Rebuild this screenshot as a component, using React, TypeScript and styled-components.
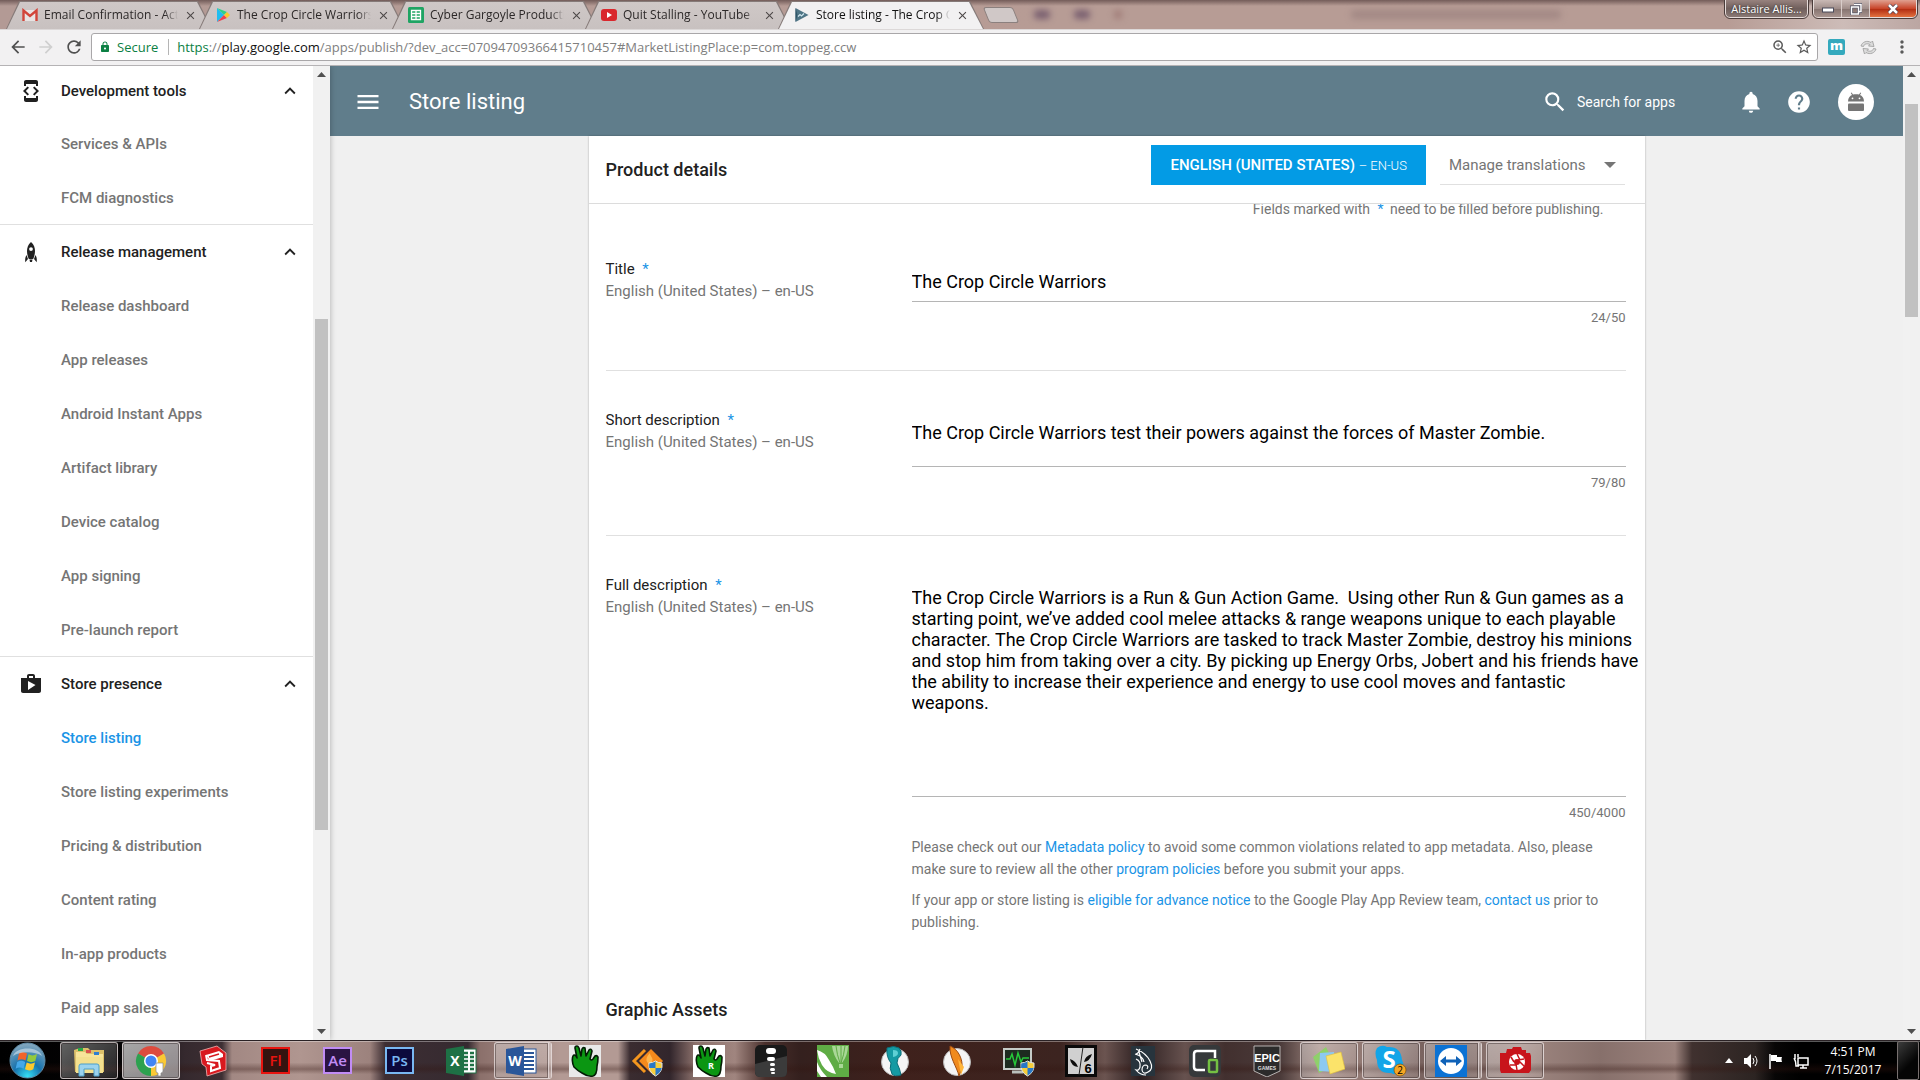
import React from "react";
import styled, { createGlobalStyle, css } from "styled-components";
import {
  MdArrowBack,
  MdArrowForward,
  MdRefresh,
  MdLock,
  MdZoomIn,
  MdStarBorder,
  MdMoreVert,
  MdMenu,
  MdSearch,
  MdNotifications,
  MdHelp,
  MdDeveloperMode,
  MdShop,
  MdKeyboardArrowUp,
  MdClose,
} from "react-icons/md";

const Global = createGlobalStyle`
  *, *::before, *::after { box-sizing: border-box; }
  body { margin: 0; overflow: hidden; font-family: Roboto, "Liberation Sans", sans-serif; }
  button, input, textarea { font-family: inherit; }
  svg { display: block; flex: none; }
`;

const ui = `"Open Sans", "Noto Sans", sans-serif`;
const blue = "#1a94e6";
const grey = "#757575";
const ink = "#212121";

/* ---------- window frame ---------- */

const Desktop = styled.div`
  height: 100vh;
  display: grid;
  grid-template-rows: 29px 37px minmax(0, 1fr) 40px;
`;

const TabStrip = styled.header`
  display: flex;
  justify-content: space-between;
  align-items: flex-start;
  padding-left: 6px;
  background:
    linear-gradient(rgba(60, 40, 40, 0.55), rgba(60, 40, 40, 0) 6px),
    linear-gradient(90deg, #b39a95, #b79c95 55%, #b79c95 90%, #cdbcb8 96%, #bba6a2);
  font-family: ${ui};
`;

const Tabs = styled.nav`
  display: flex;
  align-items: flex-end;
  height: 29px;
`;

const slant = css`
  clip-path: polygon(13px 0, calc(100% - 14px) 0, 100% 100%, 0 100%);
`;

const Tab = styled.div<{ $active?: boolean }>`
  position: relative;
  display: flex;
  align-items: center;
  gap: 6px;
  width: 206px;
  height: 28px;
  padding: 0 16px;
  margin-right: -13px;
  background: #857a78;
  ${slant}
  z-index: ${(p) => (p.$active ? 2 : 1)};
  &::before {
    content: "";
    position: absolute;
    inset: 1px 1px 0 1px;
    background: ${(p) => (p.$active ? "#f2f1f2" : "linear-gradient(#cfc8c7, #c8c1c0)")};
    ${slant}
  }
  & > * {
    position: relative;
  }
`;

const TabTitle = styled.a<{ $active?: boolean }>`
  flex: 1;
  overflow: hidden;
  white-space: nowrap;
  font-size: 12px;
  line-height: 16px;
  text-decoration: none;
  color: ${(p) => (p.$active ? "#111" : "#2c2828")};
  mask-image: linear-gradient(90deg, #000 90%, transparent);
`;

const PlainButton = styled.button`
  display: flex;
  align-items: center;
  justify-content: center;
  padding: 0;
  border: 0;
  background: none;
  color: inherit;
  cursor: pointer;
`;

const TabClose = styled(PlainButton)`
  width: 12px;
  height: 12px;
  color: #4d4848;
`;

const NewTab = styled.button`
  width: 30px;
  height: 16px;
  margin: 0 0 6px 15px;
  padding: 0;
  border: 1px solid #8b807e;
  border-radius: 3px;
  background: #d0c8c7;
  transform: skewX(22deg);
`;

const Glow = styled.div`
  flex: 1;
  display: flex;
  align-items: center;
  gap: 24px;
  height: 29px;
  padding-left: 18px;
  filter: blur(3px);
`;

const Smudge = styled.span<{ $w: number; $c: string }>`
  width: ${(p) => p.$w}px;
  height: 9px;
  border-radius: 4px;
  background: ${(p) => p.$c};
  &:last-child {
    margin-left: 205px;
  }
`;

const WindowControls = styled.div`
  display: flex;
  gap: 5px;
  padding-right: 3px;
`;

const Profile = styled.button`
  width: 83px;
  height: 18px;
  padding: 0;
  border: 1px solid #e6dcda;
  border-top: 0;
  border-radius: 0 0 5px 5px;
  outline: 1px solid #4a3c3a;
  background: linear-gradient(#97827e, #705f5c 50%, #8a7975);
  color: #fff;
  font-size: 11px;
  line-height: 14px;
  text-shadow: 0 0 2px #222;
  font-family: ${ui};
`;

const WinButtons = styled.div`
  display: flex;
  height: 18px;
  border: 1px solid #e6dcda;
  border-top: 0;
  border-radius: 0 0 5px 5px;
  outline: 1px solid #4a3c3a;
  overflow: hidden;
`;

const WinButton = styled.button<{ $close?: boolean }>`
  display: flex;
  align-items: center;
  justify-content: center;
  width: ${(p) => (p.$close ? 46 : 28)}px;
  padding: 0;
  border: 0;
  border-right: 1px solid #d9cdca;
  background: ${(p) =>
    p.$close
      ? "linear-gradient(#e0a090, #c8452a 50%, #b02a10 52%, #e2713f)"
      : "linear-gradient(#c9b9b5, #a08e8a 50%, #85736f 52%, #a8948f)"};
  &:last-child {
    border-right: 0;
  }
`;

const Toolbar = styled.div`
  display: flex;
  align-items: center;
  padding: 0 8px;
  background: #f2f1f2;
  border-bottom: 1px solid #b5b3b5;
  box-shadow: inset 0 1px 0 #dcd8d8;
  color: #5a5a5a;
  font-family: ${ui};
`;

const NavButtons = styled.div`
  display: flex;
  gap: 9px;
  margin-right: 8px;
`;

const NavButton = styled(PlainButton)`
  width: 19px;
  height: 22px;
  color: #505050;
  &:disabled {
    color: #cfcfcf;
  }
`;

const Omnibox = styled.div`
  flex: 1;
  display: flex;
  align-items: center;
  gap: 6px;
  height: 28px;
  padding: 0 4px 0 7px;
  border: 1px solid #a9a7a9;
  border-radius: 3px;
  background: #fff;
  font-size: 13px;
  line-height: 20px;
`;

const Secure = styled.span`
  padding-right: 10px;
  border-right: 1px solid #b5b5b5;
  color: #0b8043;
  line-height: 16px;
`;

const Url = styled.a`
  flex: 1;
  padding-left: 2px;
  color: #808080;
  text-decoration: none;
  b {
    font-weight: 400;
    color: #111;
  }
  i {
    font-style: normal;
    color: #0b8043;
  }
`;

const Extensions = styled.div`
  display: flex;
  align-items: center;
  gap: 15px;
  margin-left: 10px;
`;

const MGlyph = styled.span`
  width: 17px;
  height: 16px;
  border-radius: 2px;
  background: #34a9bd;
  color: #fff;
  font: 800 13px/13px ${ui};
  text-align: center;
`;

/* ---------- page ---------- */

const Page = styled.div`
  display: grid;
  grid-template-columns: 330px minmax(0, 1fr) 17px;
  overflow: hidden;
  background: #f0f0f0;
`;

const Sidebar = styled.aside`
  position: relative;
  z-index: 1;
  display: grid;
  grid-template-columns: minmax(0, 1fr) 17px;
  overflow: hidden;
  background: #fff;
  box-shadow: 0 0 6px rgba(0, 0, 0, 0.28);
`;

const MenuList = styled.nav`
  overflow: hidden;
  & > :first-child {
    margin-top: -4px;
  }
`;

const Group = styled.section`
  & + & {
    border-top: 1px solid #e0e0e0;
  }
  & + & > button {
    height: 53px;
    padding-top: 0;
  }
`;

const GroupHead = styled.button`
  display: flex;
  align-items: center;
  width: 100%;
  height: 54px;
  padding: 4px 12px 0 19px;
  border: 0;
  background: none;
  color: ${ink};
  font-size: 15px;
  font-weight: 500;
  text-align: left;
  cursor: pointer;
  span {
    flex: 1;
    padding-left: 18px;
  }
`;

const MenuItem = styled.a<{ $active?: boolean }>`
  display: flex;
  align-items: center;
  height: 54px;
  padding: 2px 0 0 61px;
  color: ${(p) => (p.$active ? blue : grey)};
  font-size: 15px;
  font-weight: 500;
  text-decoration: none;
`;

const Scroller = styled.div<{ $before: number; $thumb: number; $after: number }>`
  display: grid;
  grid-template-rows:
    17px ${(p) => p.$before}fr ${(p) => p.$thumb}fr ${(p) => p.$after}fr
    17px;
  justify-items: center;
  align-items: center;
  background: #f1f1f1;
  i {
    grid-row: 3;
    width: 13px;
    height: 100%;
    background: #c1c1c1;
  }
  svg:last-child {
    grid-row: 5;
  }
`;

const Main = styled.main`
  display: flex;
  flex-direction: column;
  min-height: 0;
  overflow: hidden;
`;

const AppBar = styled.header`
  flex: none;
  display: flex;
  align-items: center;
  height: 70px;
  padding: 1px 29px 0 24px;
  background: #607d8b;
  color: #fff;
`;

const AppTitle = styled.h1`
  flex: 1;
  margin: 0 0 0 27px;
  font-size: 22px;
  line-height: 28px;
  font-weight: 400;
`;

const SearchBox = styled.label`
  display: flex;
  align-items: center;
  gap: 9px;
  margin-right: 45px;
  input {
    width: 116px;
    padding: 0;
    border: 0;
    outline: 0;
    background: none;
    color: #fff;
    font-size: 14px;
    line-height: 20px;
  }
  input::placeholder {
    color: #fff;
    opacity: 1;
  }
`;

const HelpButton = styled(PlainButton)`
  margin-left: 22px;
`;

const Avatar = styled(PlainButton)`
  width: 36px;
  height: 36px;
  margin-left: 26px;
  border-radius: 50%;
  background: #fff;
`;

const Card = styled.article`
  flex: 1;
  display: flex;
  flex-direction: column;
  min-height: 0;
  width: 100%;
  max-width: 1056px;
  margin: 0 auto;
  background: #fff;
  box-shadow: 0 0 2px rgba(0, 0, 0, 0.3);
`;

const CardHead = styled.div`
  flex: none;
  display: flex;
  align-items: flex-start;
  height: 68px;
  padding: 9px 20px 0 17px;
  border-bottom: 1px solid #dcdcdc;
`;

const Heading = styled.h2`
  flex: 1;
  margin: 0;
  color: ${ink};
  font-size: 18px;
  line-height: 22px;
  font-weight: 500;
`;

const CardHeading = styled(Heading)`
  padding-top: 14px;
`;

const LangButton = styled.button`
  height: 40px;
  padding: 0 19px;
  border: 0;
  background: #039be5;
  color: #fff;
  font-size: 15px;
  font-weight: 500;
  white-space: nowrap;
  small {
    font-size: 13px;
    font-weight: 300;
  }
`;

const Translations = styled.button`
  display: flex;
  align-items: center;
  gap: 18px;
  height: 40px;
  margin-left: 14px;
  padding: 0 9px;
  border: 0;
  border-bottom: 1px solid #e0e0e0;
  background: none;
  color: ${grey};
  font-size: 15px;
`;

const Scroll = styled.form`
  flex: 1;
  min-height: 0;
  overflow: hidden;
  padding: 0 19px 0 17px;
`;

const Note = styled.p`
  margin: -6px 22px 0 0;
  color: ${grey};
  font-size: 14px;
  line-height: 22px;
  text-align: right;
`;

const Star = styled.span`
  margin: 0 3px 0 4px;
  color: ${blue};
`;

const Field = styled.section`
  display: grid;
  grid-template-columns: 306px minmax(0, 1fr);
  padding: 38px 0 44px;
  & + & {
    border-top: 1px solid #e0e0e0;
  }
`;

const FieldLabel = styled.label`
  color: ${ink};
  font-size: 15px;
  line-height: 22px;
  small {
    display: block;
    color: ${grey};
    font-size: 15px;
  }
`;

const Control = styled.div`
  display: flex;
  flex-direction: column;
  padding-top: 13px;
`;

const Underlined = styled.div`
  display: grid;
  grid-template-columns: 100%;
  border-bottom: 1px solid #b5b5b5;
`;

const entry = css`
  display: block;
  padding: 0;
  border: 0;
  outline: 0;
  background: none;
  color: #000;
  font-size: 18px;
  line-height: 21px;
`;

const TextInput = styled.input`
  ${entry}
  height: 30px;
  padding-bottom: 9px;
`;

const TextArea = styled.textarea<{ $h: number }>`
  ${entry}
  width: calc(100% + 18px);
  height: ${(p) => p.$h}px;
  resize: none;
  overflow: hidden;
`;

const Counter = styled.span`
  margin-top: 8px;
  color: ${grey};
  font-size: 13px;
  line-height: 16px;
  text-align: right;
`;

const Help = styled.div`
  margin-top: 15px;
  color: ${grey};
  font-size: 14px;
  line-height: 22px;
  p {
    margin: 0 0 9px;
  }
  p:last-child {
    margin: 0;
  }
  a {
    color: ${blue};
    text-decoration: none;
  }
`;

const Assets = styled(Heading)`
  padding-top: 22px;
`;

/* ---------- taskbar ---------- */

const Taskbar = styled.footer`
  display: flex;
  align-items: stretch;
  border-top: 1px solid #2a2225;
  box-shadow: inset 0 1px 0 rgba(255, 255, 255, 0.35);
  background:
    linear-gradient(transparent 55%, rgba(50, 20, 15, 0.35) 72%, transparent 85%),
    linear-gradient(
      90deg,
      #000 0,
      #050405 120px,
      #35292e 185px,
      #3d2f33 222px,
      #a28883 232px,
      #b09690 300px,
      #9c827d 370px,
      #3d2e33 385px,
      #352a30 468px,
      #8b706b 480px,
      #b39a94 560px,
      #b39a94 618px,
      #3a2c30 630px,
      #32262c 670px,
      #8b706b 695px,
      #a0857f 735px,
      #4a302c 765px,
      #34201e 800px,
      #3f211c 900px,
      #3c2420 1060px,
      #6b5450 1105px,
      #2c1f20 1140px,
      #67524f 1185px,
      #42302f 1225px,
      #4a3a39 1280px,
      #a18780 1320px,
      #6f5a57 1450px,
      #a08882 1520px,
      #87706b 1600px,
      #9c837d 1675px,
      #40312f 1692px,
      #2c2422 1755px,
      #070606 1775px,
      #000 1800px
    );
  font-family: ${ui};
`;

const Start = styled(PlainButton)`
  width: 54px;
  margin-right: 6px;
`;

const Task = styled.button<{ $frame?: "open" | "active" | "stack" }>`
  display: flex;
  align-items: center;
  justify-content: center;
  width: 58px;
  margin: 1px 4px 1px 0;
  padding: 0;
  border: 1px solid transparent;
  border-radius: 3px;
  background: none;
  ${(p) =>
    p.$frame &&
    css`
      border-color: rgba(235, 225, 225, 0.7);
      background: linear-gradient(
        135deg,
        rgba(255, 255, 255, ${p.$frame === "active" ? 0.65 : 0.38}),
        rgba(255, 255, 255, ${p.$frame === "active" ? 0.45 : 0.12})
      );
      box-shadow: inset 0 0 0 1px rgba(20, 10, 10, 0.35);
    `}
  ${(p) =>
    p.$frame === "stack" &&
    css`
      border-right-width: 4px;
      border-right-style: double;
      padding-right: 2px;
    `}
`;

const Tray = styled.div`
  display: flex;
  align-items: center;
  gap: 10px;
  margin-left: auto;
  color: #fff;
`;

const Clock = styled.time`
  width: 68px;
  font-size: 12px;
  line-height: 18px;
  text-align: center;
`;

const ShowDesktop = styled.button`
  align-self: stretch;
  width: 22px;
  margin-right: 1px;
  padding: 0;
  border: 1px solid #77706f;
  border-radius: 2px;
  background: linear-gradient(135deg, #3c3c3c, #050505 60%);
`;

/* ---------- drawings ---------- */

const Svg = ({ w = 32, h = 32, box = "0 0 32 32", children }: any) => (
  <svg width={w} height={h} viewBox={box} aria-hidden="true">
    {children}
  </svg>
);

const ArrowMark = ({ down = false }) => (
  <Svg w={9} h={5} box="0 0 9 5">
    <path d={down ? "M0 0h9L4.500 5z" : "M0 5h9L4.500 0z"} fill="#505050" />
  </Svg>
);

const Gmail = () => (
  <Svg w={16} h={14} box="0 0 16 14">
    <rect x="1" y="2" width="14" height="11" fill="#e8e4e3" />
    <path d="M1.500 13V2.500L8 8l6.500-5.500V13" fill="none" stroke="#d2453a" strokeWidth="2.400" />
  </Svg>
);
const Play = () => (
  <Svg w={16} h={16} box="0 0 16 16">
    <path d="M2 1v14l7-7z" fill="#20bdf0" />
    <path d="M2 1l7 7 3-3z" fill="#2fd08a" />
    <path d="M2 15l7-7 3 3z" fill="#ef4050" />
    <path d="M9 8l3-3 3 3-3 3z" fill="#fcc92d" />
  </Svg>
);
const Sheets = () => (
  <Svg w={16} h={16} box="0 0 16 16">
    <rect width="16" height="16" rx="1.500" fill="#1fa463" />
    <path d="M3.500 3.500h9v9h-9zM3.500 6.500h9M3.500 9.500h9M8 3.500v9" fill="none" stroke="#fff" strokeWidth="1.300" />
  </Svg>
);
const YouTube = () => (
  <Svg w={16} h={16} box="0 0 16 16">
    <rect y="2" width="16" height="12" rx="3" fill="#d9272c" />
    <path d="M6 5v6l5-3z" fill="#fff" />
  </Svg>
);
const Console = () => (
  <Svg w={16} h={16} box="0 0 16 16">
    <path d="M1.500 1l13 7-13 7z" fill="#4e7485" />
    <path d="M1.500 1v14l2-7z" fill="#2f5567" />
    <path d="M4 9.500l2-2 1.500 1.500L10 6.500" fill="none" stroke="#cfe6ef" strokeWidth="1.200" />
  </Svg>
);
const Sync = () => (
  <Svg w={17} h={17} box="0 0 17 17">
    <g fill="#dcdcdc" stroke="#a2a2a2" strokeWidth="0.900">
      <path d="M1 7c1-4 6-6 10-3.500L12.500 2l1.500 5.500-5.500-.5 1.500-1.500C7 4 4 5 3.500 7.500z" />
      <path d="M16 10c-1 4-6 6-10 3.500L4.500 15 3 9.500l5.500.5L7 11.500c3 1.500 6 .5 6.500-2z" />
    </g>
  </Svg>
);
const Rocket = () => (
  <Svg w={24} h={24} box="0 0 24 24">
    <path d="M12 2c3 2.500 4 6 4 9s-.8 6-1.800 8H9.800C8.800 17 8 14 8 11s1-6.500 4-9zm0 5.200a1.900 1.900 0 100 3.800 1.900 1.900 0 000-3.800z" fill={ink} fillRule="evenodd" />
    <path d="M7.500 15l1.500 4-2.700 3.200c-.4-3 .1-5.600 1.200-7.200zM16.500 15L15 19l2.700 3.200c.4-3-.1-5.600-1.200-7.200zM10.500 19.500h3L13 22h-2z" fill={ink} />
  </Svg>
);
const Droid = () => (
  <Svg w={18} h={20} box="0 0 18 20">
    <path d="M1 9.500C1 6 3 3.800 5 3L3.800 1l.8-.5L6 2.600c2-.6 4-.6 6 0L13.400.5l.8.5L13 3c2 .8 4 3 4 6.500z" fill="#757575" />
    <rect x="1" y="11.500" width="16" height="7.500" rx="1" fill="#757575" />
    <circle cx="5.500" cy="6.300" r="0.900" fill="#fff" />
    <circle cx="12.500" cy="6.300" r="0.900" fill="#fff" />
  </Svg>
);

const Windows = () => (
  <Svg w={37} h={37} box="0 0 37 37">
    <defs>
      <radialGradient id="orb" cx="50%" cy="95%" r="90%">
        <stop offset="0" stopColor="#35e0f5" />
        <stop offset="0.450" stopColor="#1672ad" />
        <stop offset="1" stopColor="#7fa5bd" />
      </radialGradient>
    </defs>
    <circle cx="18.500" cy="18.500" r="17.500" fill="url(#orb)" stroke="#5f8ba5" />
    <path d="M10 11.500c3-1.800 5-1.600 8 0l-1.500 7c-3-1.600-5-1.600-8 0z" fill="#f0642a" />
    <path d="M19.500 12.300c3 1.600 5.500 1.400 8.500-.3l-1.700 7c-3 1.500-5.300 1.500-8.300 0z" fill="#94c93d" />
    <path d="M8.200 20c3-1.600 5-1.500 8 0l-1.600 6.800c-3-1.600-5-1.600-8 0z" fill="#44a8e8" />
    <path d="M17.700 20.500c3 1.500 5.300 1.500 8.300 0l-1.700 6.800c-3 1.600-5.300 1.500-8.300 0z" fill="#fdc92e" />
    <path d="M4 14C7 4 30 4 33 14 26 9 11 9 4 14z" fill="#fff" opacity="0.450" />
  </Svg>
);
const Explorer = () => (
  <Svg>
    <path d="M1 5l6-2h8l2 2h14v22H2z" fill="#dcc06a" />
    <path d="M3 7h9l2 2h16v19H3z" fill="#f7e49a" />
    <path d="M5 3h5v3H5z" fill="#28a745" />
    <path d="M13 5h5v3h-5z" fill="#d9534f" />
    <path d="M21 7h5v3h-5z" fill="#2f7fd0" />
    <path d="M3 12h27v16H3z" fill="#f3e08f" />
    <path d="M6 31V21q0-2 2-2h16q2 0 2 2v10h-5v-7H11v7z" fill="#9bd3ee" stroke="#4d9fc9" />
  </Svg>
);
const Chrome = () => (
  <Svg>
    <path d="M16 16L3 8.500A15 15 0 0129 8.500z" fill="#dd4b3e" />
    <path d="M16 16L29 8.500A15 15 0 0116 31z" fill="#fbc934" />
    <path d="M16 16v15A15 15 0 013 8.500z" fill="#2da14f" />
    <circle cx="16" cy="16" r="7" fill="#fff" />
    <circle cx="16" cy="16" r="5.500" fill="#4285f4" />
    <path d="M21 18h7v8q0 2-2 2v3h-3v-3q-2 0-2-2z" fill="#fff" stroke="#888" strokeWidth="0.700" />
  </Svg>
);
const SketchUp = () => (
  <Svg>
    <path d="M3 6L20 1l9 7v17L10 31l-1-9-4-3z" fill="#d8191f" stroke="#f3b5b5" strokeWidth="0.800" />
    <path d="M9 10l13-4 4 3v3L13 16z" fill="#fff" />
    <path d="M9 10l1 5 12 1 1 7-9 3v-5l4-1-8-2" fill="none" stroke="#fff" strokeWidth="2" />
    <path d="M12 12l10-3" stroke="#d8191f" strokeWidth="1.500" />
  </Svg>
);
const Adobe = ({ text, edge, fill }: any) => (
  <Svg w={29} h={27} box="0 0 29 27">
    <rect x="1" y="1" width="27" height="25" fill={fill} stroke={edge} strokeWidth="2" />
    <text x="14.500" y="19" fontSize="15" fontWeight="600" textAnchor="middle" fill={edge} fontFamily='"Open Sans", sans-serif'>
      {text}
    </text>
  </Svg>
);
const Office = ({ text, c }: any) => (
  <Svg>
    <rect x="17" y="4" width="14" height="24" fill="#fff" stroke={c} />
    {text === "X" ? (
      <path d="M19 8h4m2 0h4M19 12h4m2 0h4M19 16h4m2 0h4M19 20h4m2 0h4M19 24h4m2 0h4" stroke={c} strokeWidth="2.500" />
    ) : (
      <path d="M19 8h10M19 12h10M19 16h10M19 20h10M19 24h10" stroke={c} strokeWidth="1.800" />
    )}
    <path d="M1 4l18-3v30L1 28z" fill={c} />
    <text x="10" y="21" fontSize="14" fontWeight="700" textAnchor="middle" fill="#fff" fontFamily='"Open Sans", sans-serif'>
      {text}
    </text>
  </Svg>
);
const Hand = ({ r = false }) => (
  <Svg>
    <rect width="32" height="32" fill={r ? "#fff" : "#e9e9e9"} />
    <path
      d="M5 22C3 18 3 13 4 11q1-2 3 0l1 2L6 3q0-2 2-2 1 0 2 2l2 8 1-7q1-2 3-1l1 8 3-6q2-2 3 1l-2 8q1 2 3 0l2-3q2-1 3 1 0 5-1 9 0 9-4 10-5 1-11-3-4-2-8-6z"
      fill="#0b9612"
      stroke="#041c05"
      strokeWidth="1.600"
      strokeLinejoin="round"
    />
    {r && (
      <text x="18" y="24" fontSize="9" fontWeight="700" textAnchor="middle" fill="#fff" fontFamily='"Open Sans", sans-serif'>
        R
      </text>
    )}
  </Svg>
);
const Shield = ({ x, y }: any) => (
  <g transform={`translate(${x} ${y})`}>
    <path d="M0 2q4 0 6.500-2Q9 2 13 2q1 9-6.500 13Q-1 11 0 2z" fill="#f7ce3c" stroke="#dfe6ee" />
    <path d="M6.500.5V7H.2Q0 5 .3 2.500 4 2 6.500.5zM6.500 7h6.200q-1 5-6.200 7.500z" fill="#2878c8" />
  </g>
);
const Flame = () => (
  <Svg>
    <path d="M14 5L3 16l11 11" fill="none" stroke="#f4961e" strokeWidth="3" />
    <path d="M20 4l12 12-12 12L8 16z" fill="#f58a1c" />
    <path d="M18 19c-4-3-3-7 1-11 0 4 5 5 1 11z" fill="#ffb64d" />
    <Shield x={18} y={16} />
  </Svg>
);
const Bones = () => (
  <Svg>
    <rect width="32" height="32" rx="5" fill="#191919" />
    <path d="M0 19L32 11v16q0 5-5 5H5q-5 0-5-5z" fill="#3b3b3b" />
    <g fill="#fff">
      <rect x="11" y="3" width="10" height="6" rx="3" />
      <rect x="12" y="12" width="8" height="4" rx="2" />
      <rect x="15" y="18" width="5" height="3" rx="1.500" />
      <rect x="15" y="23" width="5" height="3" rx="1.500" />
      <rect x="16" y="27" width="4" height="2" rx="1" />
    </g>
  </Svg>
);
const Corel = () => (
  <Svg>
    <rect width="32" height="32" fill="#5fac45" />
    <path d="M0 5q8 2 12 10 4 6 7 14-9-1-14-9Q1 13 0 5zM0 17q3 8 10 15H4l-4-6z" fill="#fff" />
    <path d="M15 1q1 9 7 17h3q6-8 6-17zM22 19h4v4h-4z" fill="#a9d797" />
    <path d="M19 1q1 9 4 17M24 1v17M28 1q-1 9-4 17" fill="none" stroke="#5fac45" />
  </Svg>
);
const Manga = ({ orange = false }) => (
  <Svg>
    <circle cx="16" cy="17" r="13.500" fill="#f5f5f5" stroke="#b9b9b9" />
    {orange ? (
      <>
        <path d="M9 1c8 3 13 13 12 22l-3 8C16 22 8 12 9 1z" fill="#f08a1d" stroke="#9c4a10" />
        <path d="M17 14l6 8-3 8z" fill="#ffb63c" />
      </>
    ) : (
      <>
        <path d="M8 3q7-3 12 0 3 3 2 7-4 3-4 8 3 6 4 12-6 2-9-1-3-6-1-11Q7 12 8 3z" fill="#159aa3" stroke="#0b6d78" />
        <path d="M14 5q5 0 5 3t-5 4z" fill="#5fd0d4" />
      </>
    )}
  </Svg>
);
const Monitor = () => (
  <Svg>
    <rect x="1" y="4" width="27" height="20" fill="#1d2b20" stroke="#c5ccc8" strokeWidth="2" />
    <path d="M3 14h4l2-5 3 11 3-12 3 9 2-4h6" fill="none" stroke="#27c93a" strokeWidth="1.500" />
    <path d="M9 27h11" stroke="#b9c0bc" strokeWidth="3" />
    <Shield x={18} y={16} />
  </Svg>
);
const Six = () => (
  <Svg>
    <rect x="1.500" y="1.500" width="29" height="29" fill="#d0d0d0" stroke="#0a0a0a" strokeWidth="3" />
    <path d="M18 2l-4 28" stroke="#222" />
    <path d="M5 14q6 2 8 8-7-1-8-8zM27 9q-2 7-8 8 1-6 8-8z" fill="#0d0d0d" />
    <text x="23" y="28" fontSize="13" fontWeight="700" textAnchor="middle" fill="#000" fontFamily='"Liberation Sans", sans-serif'>
      6
    </text>
  </Svg>
);
const Swirl = () => (
  <Svg w={24} h={30} box="0 0 24 30">
    <rect width="24" height="30" fill="#27343d" />
    <path
      d="M5 3q10 4 14 12t-2 11q-5 3-6-2 0-5 4-5 3 1 1 4M4 8q8 2 9 8M9 3q-2 5-4 5M5 13q5 2 4 8-1 4-4 3 4 5 10 5M8 6l3 10"
      fill="none"
      stroke="#fff"
      strokeWidth="1.200"
    />
  </Svg>
);
const Phones = () => (
  <Svg>
    <rect width="32" height="32" rx="5" fill="#36393b" />
    <path d="M16 25H8q-3 0-3-3V9q0-3 3-3h18v7" fill="none" stroke="#fff" strokeWidth="2.500" />
    <rect x="20" y="15" width="8" height="12" rx="1" fill="none" stroke="#74c043" strokeWidth="2.500" />
  </Svg>
);
const Epic = () => (
  <Svg>
    <path d="M3 1h26v25l-13 6-13-6z" fill="#2c2b2b" stroke="#b7b3b2" />
    <text x="16" y="17" fontSize="11" fontWeight="700" textAnchor="middle" fill="#fff" fontFamily='"Liberation Sans Narrow", "Liberation Sans", sans-serif'>
      EPIC
    </text>
    <text x="16" y="25" fontSize="5" fontWeight="700" textAnchor="middle" fill="#ddd" fontFamily='"Liberation Sans", sans-serif'>
      GAMES
    </text>
  </Svg>
);
const Notes = () => (
  <Svg>
    <path d="M0 12L13 2l9 18-16 8z" fill="#8fd06a" />
    <path d="M7 8l14-1v20l-15-1z" fill="#8cc9f0" />
    <path d="M13 11l15-4 4 17-15 5z" fill="#fbe36a" stroke="#e0c03a" strokeWidth="0.600" />
  </Svg>
);
const Skype = () => (
  <Svg w={34} h={32} box="0 0 34 32">
    <path d="M3 3q5-4 10-1 14-1 15 13 3 6-1 12-5 4-10 1Q3 29 3 15 0 8 3 3z" fill="#12a5e8" />
    <text x="15" y="23" fontSize="24" fontWeight="700" textAnchor="middle" fill="#fff" fontFamily='"Open Sans", sans-serif'>
      S
    </text>
    <circle cx="26" cy="25" r="6" fill="#f5a623" stroke="#7a5010" strokeWidth="0.700" />
    <text x="26" y="29" fontSize="10" textAnchor="middle" fill="#000" fontFamily='"Open Sans", sans-serif'>
      2
    </text>
  </Svg>
);
const TeamViewer = () => (
  <Svg>
    <rect width="32" height="32" fill="#0b72d4" />
    <circle cx="16" cy="16" r="13" fill="#fff" />
    <path d="M5 16l6-5v3.500h10V11l6 5-6 5v-3.500H11V21z" fill="#0f62b8" />
  </Svg>
);
const Camera = () => (
  <Svg>
    <path d="M1 8h6l1-4h5l1-2h8l1 3h4v3h4l1 3v14l-2 3H2l-1-3z" fill="#c8141b" />
    <circle cx="18" cy="17" r="8" fill="#fff" />
    <circle cx="18" cy="17" r="3" fill="#c8141b" />
    <path d="M18 9l3 6M25 14l-6 1M25 21l-5-5M18 25l-1-6M11 20l6 0M12 12l3 5" stroke="#c8141b" strokeWidth="1.500" />
  </Svg>
);
const Speaker = () => (
  <Svg w={16} h={16} box="0 0 16 16">
    <path d="M1 5h3l4-4v14l-4-4H1z" fill="#fff" />
    <path d="M10 5q2 3 0 6M12 3q4 5 0 10" fill="none" stroke="#fff" />
  </Svg>
);
const Flag = () => (
  <Svg w={14} h={16} box="0 0 14 16">
    <path d="M1 1v15" stroke="#fff" strokeWidth="1.500" />
    <path d="M2 2h6v2h5q-1 2 0 5H7V8H2z" fill="#fff" />
  </Svg>
);
const Network = () => (
  <Svg w={16} h={16} box="0 0 16 16">
    <path d="M5 5h10v7H5zM7 15h7M10 12v3M2 1v5M5 1v3M1 5q2 3 2 8h3" fill="none" stroke="#fff" strokeWidth="1.500" />
  </Svg>
);

/* ---------- data ---------- */

const tabs = [
  { title: "Email Confirmation - Activate", icon: <Gmail /> },
  { title: "The Crop Circle Warriors - A", icon: <Play /> },
  { title: "Cyber Gargoyle Productions", icon: <Sheets /> },
  { title: "Quit Stalling - YouTube", icon: <YouTube /> },
  { title: "Store listing - The Crop Circle", icon: <Console />, active: true },
];

const groups = [
  {
    name: "Development tools",
    icon: <MdDeveloperMode size={24} />,
    items: ["Services & APIs", "FCM diagnostics"],
  },
  {
    name: "Release management",
    icon: <Rocket />,
    items: [
      "Release dashboard",
      "App releases",
      "Android Instant Apps",
      "Artifact library",
      "Device catalog",
      "App signing",
      "Pre-launch report",
    ],
  },
  {
    name: "Store presence",
    icon: <MdShop size={24} />,
    items: [
      "Store listing",
      "Store listing experiments",
      "Pricing & distribution",
      "Content rating",
      "In-app products",
      "Paid app sales",
    ],
  },
];

const tasks: { name: string; icon: React.ReactNode; frame?: "open" | "active" | "stack" }[] = [
  { name: "Explorer", icon: <Explorer />, frame: "open" },
  { name: "Chrome", icon: <Chrome />, frame: "active" },
  { name: "SketchUp", icon: <SketchUp /> },
  { name: "Flash", icon: <Adobe text="Fl" edge="#e8140f" fill="#35130f" /> },
  { name: "After Effects", icon: <Adobe text="Ae" edge="#c18cf5" fill="#2a1442" /> },
  { name: "Photoshop", icon: <Adobe text="Ps" edge="#79b8f2" fill="#0c0a3c" /> },
  { name: "Excel", icon: <Office text="X" c="#1e7145" /> },
  { name: "Word", icon: <Office text="W" c="#2a5699" />, frame: "stack" },
  { name: "Poser", icon: <Hand /> },
  { name: "Flame", icon: <Flame /> },
  { name: "Poser R", icon: <Hand r /> },
  { name: "Bones", icon: <Bones /> },
  { name: "Corel", icon: <Corel /> },
  { name: "Manga", icon: <Manga /> },
  { name: "Anime", icon: <Manga orange /> },
  { name: "Monitor", icon: <Monitor /> },
  { name: "Six", icon: <Six /> },
  { name: "Swirl", icon: <Swirl /> },
  { name: "Phones", icon: <Phones /> },
  { name: "Epic Games", icon: <Epic /> },
  { name: "Sticky Notes", icon: <Notes />, frame: "open" },
  { name: "Skype", icon: <Skype />, frame: "open" },
  { name: "TeamViewer", icon: <TeamViewer />, frame: "stack" },
  { name: "Camera", icon: <Camera />, frame: "open" },
];

const fullText =
  "The Crop Circle Warriors is a Run & Gun Action Game.  Using other Run & Gun games as a starting point, we’ve added cool melee attacks & range weapons unique to each playable character. The Crop Circle Warriors are tasked to track Master Zombie, destroy his minions and stop him from taking over a city. By picking up Energy Orbs, Jobert and his friends have the ability to increase their experience and energy to use cool moves and fantastic weapons.";

const Caption = ({ id, text }: { id: string; text: string }) => (
  <FieldLabel htmlFor={id}>
    {text} <Star>*</Star>
    <small>English (United States) – en-US</small>
  </FieldLabel>
);

export default function App() {
  return (
    <Desktop>
      <Global />
      <TabStrip>
        <Tabs>
          {tabs.map((t) => (
            <Tab key={t.title} $active={t.active}>
              {t.icon}
              <TabTitle href="#" $active={t.active}>
                {t.title}
              </TabTitle>
              <TabClose aria-label="Close tab">
                <MdClose size={13} />
              </TabClose>
            </Tab>
          ))}
          <NewTab aria-label="New tab" />
        </Tabs>
        <Glow>
          <Smudge $w={16} $c="#7a6070" />
          <Smudge $w={16} $c="#7a6070" />
          <Smudge $w={8} $c="#a07c78" />
          <Smudge $w={210} $c="#a38985" />
        </Glow>
        <WindowControls>
          <Profile>Alstaire Allis...</Profile>
          <WinButtons>
            <WinButton aria-label="Minimize">
              <Svg w={12} h={10} box="0 0 12 10">
                <rect x="0.500" y="4" width="11" height="4" fill="#fff" stroke="#4b4b5b" />
              </Svg>
            </WinButton>
            <WinButton aria-label="Restore">
              <Svg w={12} h={12} box="0 0 12 12">
                <path d="M4 1.500h7v7H9M1.500 4h7v7h-7z" fill="none" stroke="#4b4b5b" strokeWidth="3" />
                <path d="M4 1.500h7v7H9M1.500 4h7v7h-7z" fill="none" stroke="#fff" strokeWidth="1.500" />
              </Svg>
            </WinButton>
            <WinButton $close aria-label="Close">
              <Svg w={12} h={10} box="0 0 12 10">
                <path d="M2 1l8 8M10 1L2 9" stroke="#4b3b4b" strokeWidth="4" />
                <path d="M2 1l8 8M10 1L2 9" stroke="#fff" strokeWidth="2.500" />
              </Svg>
            </WinButton>
          </WinButtons>
        </WindowControls>
      </TabStrip>

      <Toolbar>
        <NavButtons>
          <NavButton aria-label="Back">
            <MdArrowBack size={20} />
          </NavButton>
          <NavButton aria-label="Forward" disabled>
            <MdArrowForward size={20} />
          </NavButton>
          <NavButton aria-label="Reload">
            <MdRefresh size={20} />
          </NavButton>
        </NavButtons>
        <Omnibox>
          <MdLock size={12} color="#0b8043" />
          <Secure>Secure</Secure>
          <Url href="#">
            <i>https</i>://<b>play.google.com</b>
            /apps/publish/?dev_acc=07094709366415710457#MarketListingPlace:p=com.toppeg.ccw
          </Url>
          <PlainButton aria-label="Zoom">
            <MdZoomIn size={18} />
          </PlainButton>
          <PlainButton aria-label="Bookmark">
            <MdStarBorder size={18} />
          </PlainButton>
        </Omnibox>
        <Extensions>
          <MGlyph>m</MGlyph>
          <Sync />
          <PlainButton aria-label="Chrome menu">
            <MdMoreVert size={20} />
          </PlainButton>
        </Extensions>
      </Toolbar>

      <Page>
        <Sidebar>
          <MenuList>
            {groups.map((g) => (
              <Group key={g.name}>
                <GroupHead>
                  {g.icon}
                  <span>{g.name}</span>
                  <MdKeyboardArrowUp size={22} />
                </GroupHead>
                {g.items.map((i) => (
                  <MenuItem key={i} href="#" $active={i === "Store listing"}>
                    {i}
                  </MenuItem>
                ))}
              </Group>
            ))}
          </MenuList>
          <Scroller $before={236} $thumb={511} $after={193}>
            <ArrowMark />
            <i />
            <ArrowMark down />
          </Scroller>
        </Sidebar>

        <Main>
          <AppBar>
            <PlainButton aria-label="Menu">
              <MdMenu size={28} />
            </PlainButton>
            <AppTitle>Store listing</AppTitle>
            <SearchBox>
              <MdSearch size={26} />
              <input placeholder="Search for apps" aria-label="Search for apps" />
            </SearchBox>
            <PlainButton aria-label="Notifications">
              <MdNotifications size={26} />
            </PlainButton>
            <HelpButton aria-label="Help">
              <MdHelp size={26} />
            </HelpButton>
            <Avatar aria-label="Account">
              <Droid />
            </Avatar>
          </AppBar>

          <Card>
            <CardHead>
              <CardHeading>Product details</CardHeading>
              <LangButton>
                ENGLISH (UNITED STATES) <small>– EN-US</small>
              </LangButton>
              <Translations>
                Manage translations
                <Svg w={12} h={6} box="0 0 12 6">
                  <path d="M0 0h12L6 6z" fill="#757575" />
                </Svg>
              </Translations>
            </CardHead>
            <Scroll>
              <Note>
                Fields marked with <Star>*</Star> need to be filled before publishing.
              </Note>
              <Field>
                <Caption id="title" text="Title" />
                <Control>
                  <Underlined>
                    <TextInput id="title" defaultValue="The Crop Circle Warriors" />
                  </Underlined>
                  <Counter>24/50</Counter>
                </Control>
              </Field>
              <Field>
                <Caption id="short" text="Short description" />
                <Control>
                  <Underlined>
                    <TextArea
                      id="short"
                      $h={44}
                      defaultValue="The Crop Circle Warriors test their powers against the forces of Master Zombie."
                    />
                  </Underlined>
                  <Counter>79/80</Counter>
                </Control>
              </Field>
              <Field>
                <Caption id="full" text="Full description" />
                <Control>
                  <Underlined>
                    <TextArea id="full" $h={209} defaultValue={fullText} />
                  </Underlined>
                  <Counter>450/4000</Counter>
                  <Help>
                    <p>
                      Please check out our <a href="#">Metadata policy</a> to avoid some common violations related to
                      app metadata. Also, please
                      <br />
                      make sure to review all the other <a href="#">program policies</a> before you submit your apps.
                    </p>
                    <p>
                      If your app or store listing is <a href="#">eligible for advance notice</a> to the Google Play
                      App Review team, <a href="#">contact us</a> prior to
                      <br />
                      publishing.
                    </p>
                  </Help>
                </Control>
              </Field>
              <Assets>Graphic Assets</Assets>
            </Scroll>
          </Card>
        </Main>

        <Scroller $before={21} $thumb={213} $after={706}>
          <ArrowMark />
          <i />
          <ArrowMark down />
        </Scroller>
      </Page>

      <Taskbar>
        <Start aria-label="Start">
          <Windows />
        </Start>
        {tasks.map((t) => (
          <Task key={t.name} $frame={t.frame} aria-label={t.name}>
            {t.icon}
          </Task>
        ))}
        <Tray>
          <Svg w={8} h={5} box="0 0 8 5">
            <path d="M0 5h8L4 0z" fill="#fff" />
          </Svg>
          <Speaker />
          <Flag />
          <Network />
          <Clock>
            4:51 PM
            <br />
            7/15/2017
          </Clock>
          <ShowDesktop aria-label="Show desktop" />
        </Tray>
      </Taskbar>
    </Desktop>
  );
}
